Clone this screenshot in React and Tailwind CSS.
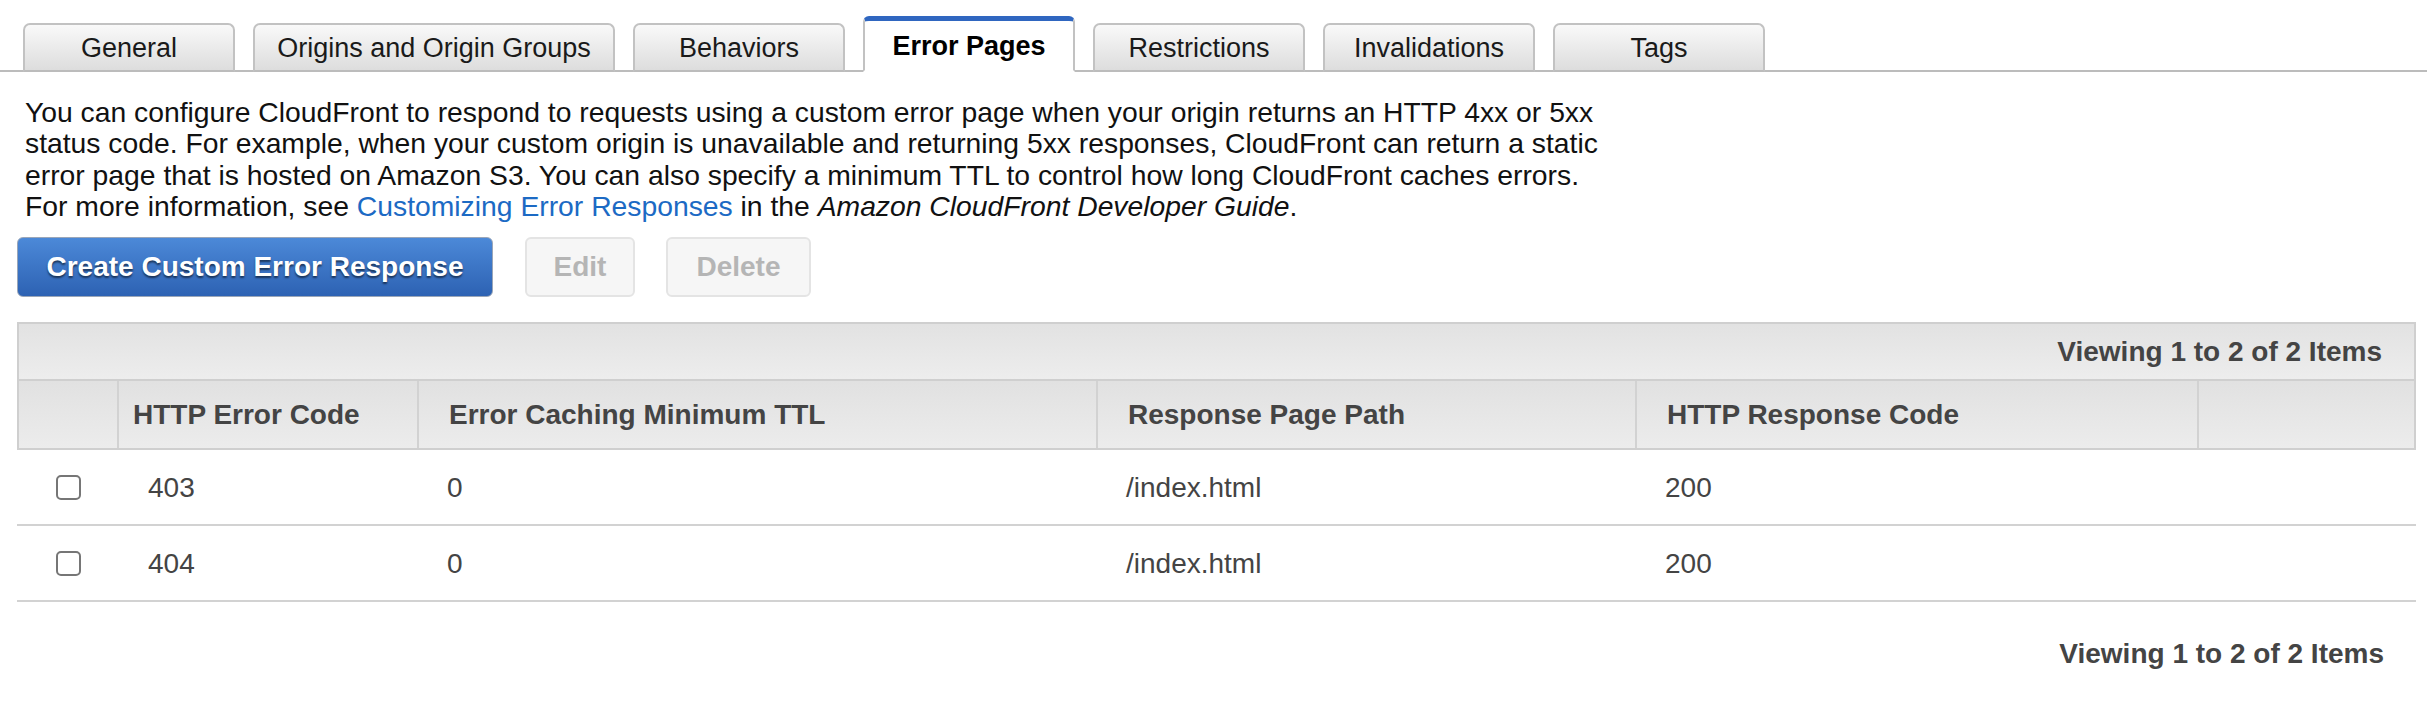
import React from "react";

const tabs = [
  { label: "General", w: "w-[212px]" },
  { label: "Origins and Origin Groups", w: "w-[362px]" },
  { label: "Behaviors", w: "w-[212px]" },
  { label: "Error Pages", w: "w-[212px]", active: true },
  { label: "Restrictions", w: "w-[212px]" },
  { label: "Invalidations", w: "w-[212px]" },
  { label: "Tags", w: "w-[212px]" },
];

const rows = [
  { code: "403", ttl: "0", path: "/index.html", resp: "200" },
  { code: "404", ttl: "0", path: "/index.html", resp: "200" },
];

const grid = "grid grid-cols-[98px_300px_679px_539px_562px_1fr]";

function Checkbox() {
  return (
    <span className="block w-[25px] h-[25px] rounded-[5px] border-2 border-[#767676] bg-white" />
  );
}

export default function App() {
  return (
    <div
      className="w-[2436px] h-[710px] bg-white text-[#111] overflow-hidden"
      style={{ fontFamily: '"Liberation Sans", Arial, Helvetica, sans-serif' }}
    >
      {/* Tabs */}
      <div className="flex items-end gap-[18px] pl-[23px] pt-[16px] border-b-2 border-[#bcbcbc] mr-[9px]">
        {tabs.map((t) =>
          t.active ? (
            <div
              key={t.label}
              className={`${t.w} h-[56px] -mb-[2px] flex items-center justify-center pt-[1px] bg-white border-t-[5px] border-t-[#2f66c0] border-x-2 border-x-[#c2c2c2] border-b-2 border-b-white rounded-t-[6px] text-[27px] font-bold text-black`}
            >
              {t.label}
            </div>
          ) : (
            <div
              key={t.label}
              className={`${t.w} h-[49px] -mb-[2px] flex items-center justify-center pt-[2px] bg-linear-to-b from-[#f9f9f9] to-[#dddddd] border-2 border-[#c2c2c2] border-b-[#bcbcbc] rounded-t-[7px] text-[27px] text-[#1a1a1a]`}
            >
              {t.label}
            </div>
          )
        )}
      </div>

      {/* Description */}
      <div className="pl-[25px] pt-[25px] text-[28.3px] leading-[31.3px] text-[#111]">
        <div>You can configure CloudFront to respond to requests using a custom error page when your origin returns an HTTP 4xx or 5xx</div>
        <div>status code. For example, when your custom origin is unavailable and returning 5xx responses, CloudFront can return a static</div>
        <div>error page that is hosted on Amazon S3. You can also specify a minimum TTL to control how long CloudFront caches errors.</div>
        <div>
          For more information, see{" "}
          <span className="text-[#1c6ac4]">Customizing Error Responses</span> in the{" "}
          <span className="italic">Amazon CloudFront Developer Guide</span>.
        </div>
      </div>

      {/* Buttons */}
      <div className="flex items-center pl-[17px] mt-[15px] gap-[32px]">
        <button className="w-[476px] h-[60px] rounded-[6px] border border-[#9aa6b8] bg-linear-to-b from-[#4c89d8] to-[#2d62b3] text-white text-[28px] font-bold [text-shadow:0_2px_2px_rgba(0,0,0,0.55)]">
          Create Custom Error Response
        </button>
        <button className="w-[110px] h-[60px] rounded-[6px] border-2 border-[#e4e4e4] bg-[#f6f6f6] text-[#b5b5b5] text-[28px] font-bold">
          Edit
        </button>
        <button className="w-[145px] h-[60px] rounded-[6px] border-2 border-[#e4e4e4] bg-[#f6f6f6] text-[#b5b5b5] text-[28px] font-bold -ml-[1px]">
          Delete
        </button>
      </div>

      {/* Table */}
      <div className="ml-[17px] mt-[25px] w-[2399px]">
        <div className="h-[59px] border-2 border-[#cfcfcf] bg-linear-to-b from-[#e2e2e2] to-[#ededed] flex items-center justify-end pr-[32px] text-[28px] font-bold text-[#444]">
          Viewing 1 to 2 of 2 Items
        </div>
        <div className={`${grid} h-[69px] border-x-2 border-b-2 border-[#cfcfcf] bg-linear-to-b from-[#e1e1e1] to-[#ececec] text-[28px] font-bold text-[#444]`}>
          <div />
          <div className="border-l-2 border-[#d2d2d2] flex items-center pl-[14px] pt-[1px]">HTTP Error Code</div>
          <div className="border-l-2 border-[#d2d2d2] flex items-center pl-[30px] pt-[1px]">Error Caching Minimum TTL</div>
          <div className="border-l-2 border-[#d2d2d2] flex items-center pl-[30px] pt-[1px]">Response Page Path</div>
          <div className="border-l-2 border-[#d2d2d2] flex items-center pl-[30px] pt-[1px]">HTTP Response Code</div>
          <div className="border-l-2 border-[#d2d2d2]" />
        </div>
        {rows.map((r) => (
          <div key={r.code} className={`${grid} h-[76px] border-b-2 border-[#d2d2d2] text-[28px] text-[#444]`}>
            <div className="flex items-center pl-[39px]">
              <Checkbox />
            </div>
            <div className="flex items-center pl-[33px] pt-[2px]">{r.code}</div>
            <div className="flex items-center pl-[32px] pt-[2px]">{r.ttl}</div>
            <div className="flex items-center pl-[32px] pt-[2px]">{r.path}</div>
            <div className="flex items-center pl-[32px] pt-[2px]">{r.resp}</div>
            <div />
          </div>
        ))}
        <div className="flex justify-end pr-[32px] pt-[36px] text-[28px] leading-[31px] font-bold text-[#444]">
          Viewing 1 to 2 of 2 Items
        </div>
      </div>
    </div>
  );
}
